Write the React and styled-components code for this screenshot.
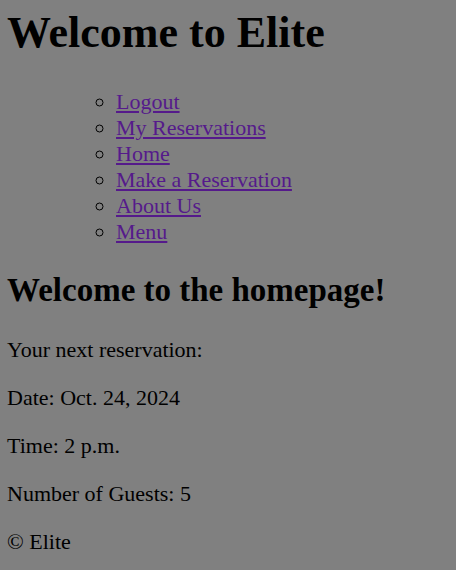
import React from "react";
import styled, { createGlobalStyle } from "styled-components";

const GlobalStyle = createGlobalStyle`
  html, body {
    margin: 0;
    padding: 0;
    background-color: #808080;
  }
  body {
    font-family: "Liberation Serif", "Times New Roman", serif;
    color: #000;
  }
`;

const Page = styled.div`
  padding: 0 7px;
  font-size: 22px;
`;

const Title = styled.h1`
  font-size: 44px;
  line-height: 51px;
  font-weight: bold;
  margin: 7px 0 0;
`;

const NavList = styled.ul`
  list-style-type: circle;
  margin: 31px 0 0;
  padding-left: 109px;
`;

const NavItem = styled.li`
  line-height: 26px;
`;

const NavLink = styled.a`
  color: #551a8b;
  text-decoration: underline;
`;

const Subtitle = styled.h2`
  font-size: 33px;
  line-height: 38.6px;
  font-weight: bold;
  margin: 26px 0 0;
`;

const Text = styled.p`
  line-height: 26px;
  margin: 22px 0 0;
  &:first-of-type {
    margin-top: 27px;
  }
`;

const links = [
  "Logout",
  "My Reservations",
  "Home",
  "Make a Reservation",
  "About Us",
  "Menu",
];

const App = () => {
  return (
    <>
      <GlobalStyle />
      <Page>
        <Title>Welcome to Elite</Title>
        <NavList>
          {links.map((l) => (
            <NavItem key={l}>
              <NavLink href="#">{l}</NavLink>
            </NavItem>
          ))}
        </NavList>
        <Subtitle>Welcome to the homepage!</Subtitle>
        <Text>Your next reservation:</Text>
        <Text>Date: Oct. 24, 2024</Text>
        <Text>Time: 2 p.m.</Text>
        <Text>Number of Guests: 5</Text>
        <Text>© Elite</Text>
      </Page>
    </>
  );
};

export default App;
